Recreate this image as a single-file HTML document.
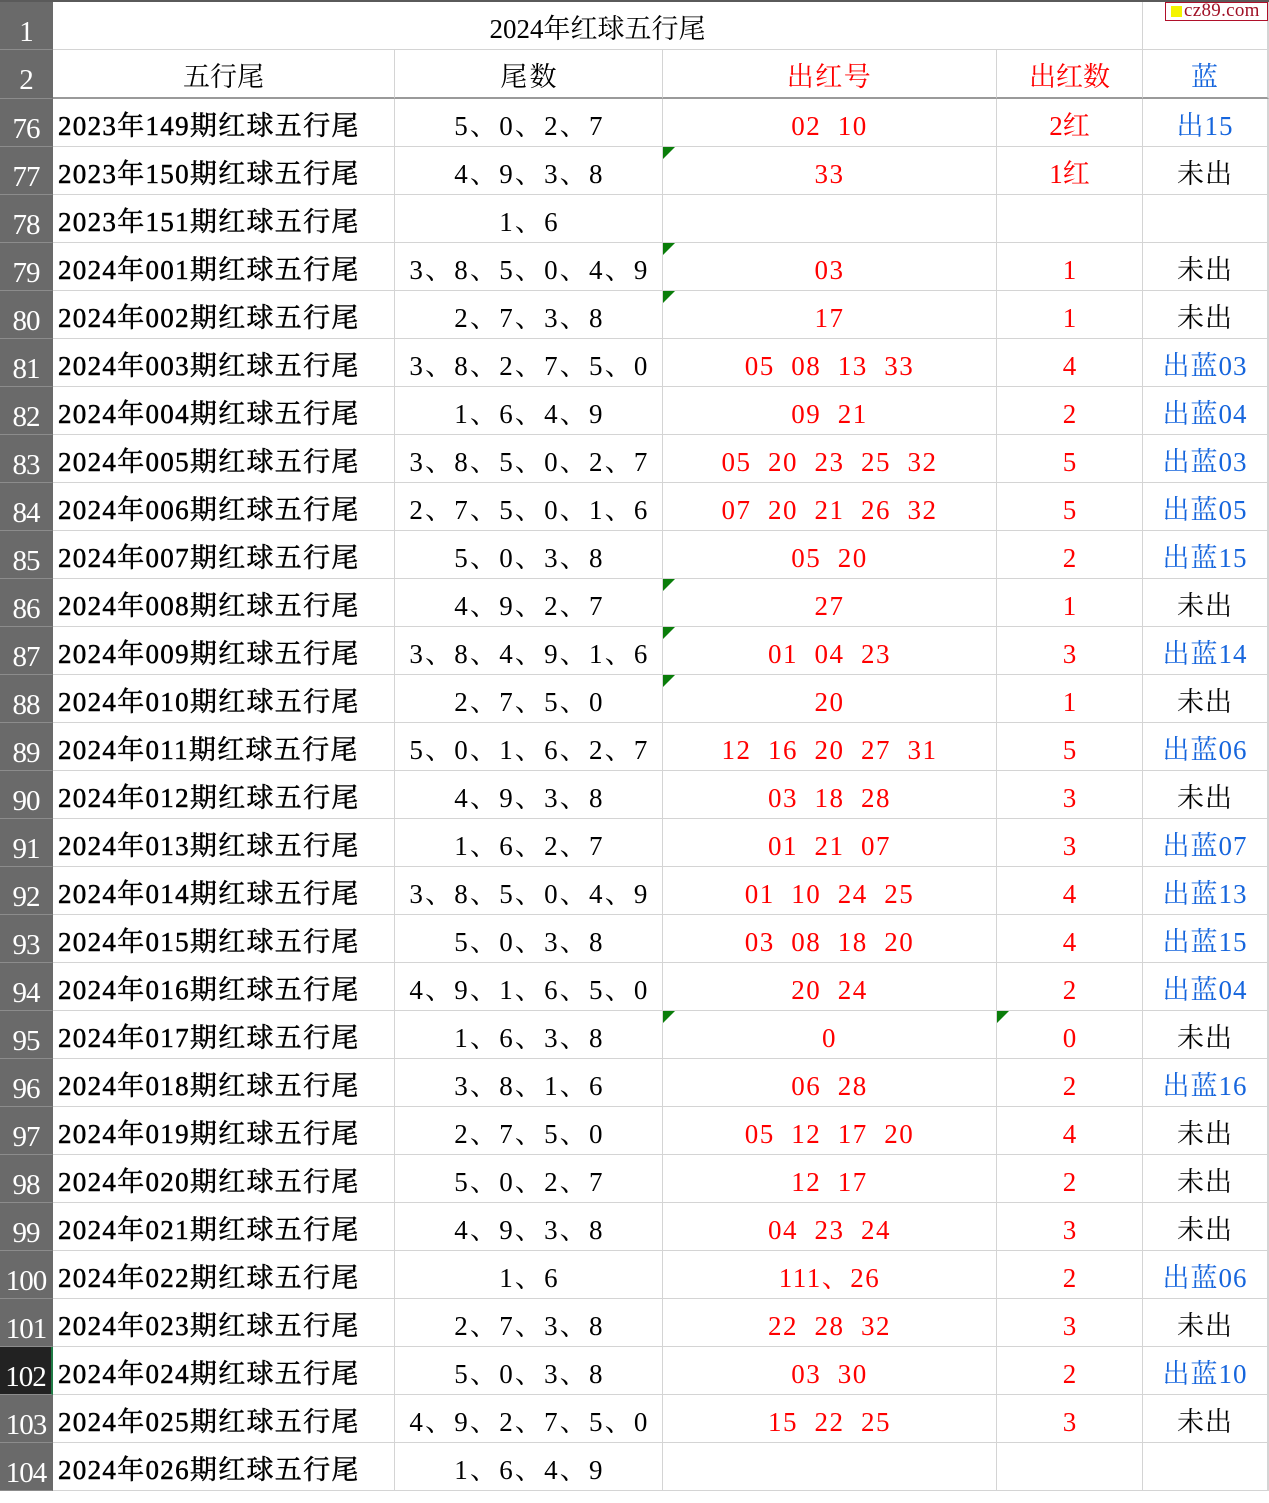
<!DOCTYPE html>
<html><head><meta charset="utf-8">
<style>
*{margin:0;padding:0;box-sizing:border-box}
body{width:1269px;height:1492px;overflow:hidden;background:#fff;position:relative;font-family:"Liberation Serif","Noto Serif CJK SC",serif;}
.top{position:absolute;left:0;top:0;width:1269px;height:2px;background:#5a5a5a}
.r{position:absolute;left:0;width:1269px;height:48px}
.r>div{position:absolute;top:0;height:48px;border-right:1px solid #d4d4d4;border-bottom:1px solid #d4d4d4;line-height:54px;white-space:pre;font-size:27px;text-align:center;color:#000}
.r>.h{left:0;width:53px;background:#6a6a6a;color:#fff;border-right:1px solid #6a6a6a;border-bottom:1px solid #8c8c8c;font-size:29px;line-height:60px;text-align:center;letter-spacing:-1px}
.r>.a{left:53px;width:342px;text-align:left;padding-left:5px;font-size:27px;letter-spacing:1.3px;-webkit-text-stroke:0.5px #000}
.r>.b{left:395px;width:268px;font-size:27px;letter-spacing:2.2px;padding-left:2px}
.r>.c{left:663px;width:334px;color:#f00;letter-spacing:1.5px}
.r>.d{left:997px;width:146px;color:#f00}
.r>.e{left:1143px;width:126px;border-right:2px solid #d4d4d4;letter-spacing:1px}
.bl{color:#1565dd!important}
.t::before{content:"";position:absolute;left:0;top:0;border-top:12px solid #0a7d0a;border-right:12px solid transparent}
.wm{position:absolute;left:1165px;top:2px;width:103px;height:19px;border:1px solid #b0102a;background:#fff;color:#a01025;font-size:19px;line-height:16px;padding-left:18px;letter-spacing:0.3px}
.wm::before{content:"";position:absolute;left:5px;top:3px;width:11px;height:11px;background:#f4f400}
</style></head><body>
<div class="top"></div>
<div class="r" style="top:2px"><div class="h">1</div><div style="left:53px;width:1090px;font-size:27px">2024年红球五行尾</div><div class="e"></div></div>
<div class="r" style="top:50px;height:49px"><div class="h" style="height:49px">2</div><div class="a" style="text-align:center;padding:0;letter-spacing:0;-webkit-text-stroke:0;border-bottom:2px solid #9a9a9a;height:49px">五行尾</div><div class="b" style="border-bottom:2px solid #9a9a9a;height:49px">尾数</div><div class="c" style="border-bottom:2px solid #9a9a9a;height:49px">出红号</div><div class="d" style="border-bottom:2px solid #9a9a9a;height:49px">出红数</div><div class="e bl" style="border-bottom:2px solid #9a9a9a;height:49px">蓝</div></div>

<div class="r" style="top:99px"><div class="h">76</div><div class="a">2023年149期红球五行尾</div><div class="b">5、0、2、7</div><div class="c">02  10</div><div class="d">2红</div><div class="e bl">出15</div></div>
<div class="r" style="top:147px"><div class="h">77</div><div class="a">2023年150期红球五行尾</div><div class="b">4、9、3、8</div><div class="c t">33</div><div class="d">1红</div><div class="e">未出</div></div>
<div class="r" style="top:195px"><div class="h">78</div><div class="a">2023年151期红球五行尾</div><div class="b">1、6</div><div class="c"></div><div class="d"></div><div class="e"></div></div>
<div class="r" style="top:243px"><div class="h">79</div><div class="a">2024年001期红球五行尾</div><div class="b">3、8、5、0、4、9</div><div class="c t">03</div><div class="d">1</div><div class="e">未出</div></div>
<div class="r" style="top:291px"><div class="h">80</div><div class="a">2024年002期红球五行尾</div><div class="b">2、7、3、8</div><div class="c t">17</div><div class="d">1</div><div class="e">未出</div></div>
<div class="r" style="top:339px"><div class="h">81</div><div class="a">2024年003期红球五行尾</div><div class="b">3、8、2、7、5、0</div><div class="c">05  08  13  33</div><div class="d">4</div><div class="e bl">出蓝03</div></div>
<div class="r" style="top:387px"><div class="h">82</div><div class="a">2024年004期红球五行尾</div><div class="b">1、6、4、9</div><div class="c">09  21</div><div class="d">2</div><div class="e bl">出蓝04</div></div>
<div class="r" style="top:435px"><div class="h">83</div><div class="a">2024年005期红球五行尾</div><div class="b">3、8、5、0、2、7</div><div class="c">05  20  23  25  32</div><div class="d">5</div><div class="e bl">出蓝03</div></div>
<div class="r" style="top:483px"><div class="h">84</div><div class="a">2024年006期红球五行尾</div><div class="b">2、7、5、0、1、6</div><div class="c">07  20  21  26  32</div><div class="d">5</div><div class="e bl">出蓝05</div></div>
<div class="r" style="top:531px"><div class="h">85</div><div class="a">2024年007期红球五行尾</div><div class="b">5、0、3、8</div><div class="c">05  20</div><div class="d">2</div><div class="e bl">出蓝15</div></div>
<div class="r" style="top:579px"><div class="h">86</div><div class="a">2024年008期红球五行尾</div><div class="b">4、9、2、7</div><div class="c t">27</div><div class="d">1</div><div class="e">未出</div></div>
<div class="r" style="top:627px"><div class="h">87</div><div class="a">2024年009期红球五行尾</div><div class="b">3、8、4、9、1、6</div><div class="c t">01  04  23</div><div class="d">3</div><div class="e bl">出蓝14</div></div>
<div class="r" style="top:675px"><div class="h">88</div><div class="a">2024年010期红球五行尾</div><div class="b">2、7、5、0</div><div class="c t">20</div><div class="d">1</div><div class="e">未出</div></div>
<div class="r" style="top:723px"><div class="h">89</div><div class="a">2024年011期红球五行尾</div><div class="b">5、0、1、6、2、7</div><div class="c">12  16  20  27  31</div><div class="d">5</div><div class="e bl">出蓝06</div></div>
<div class="r" style="top:771px"><div class="h">90</div><div class="a">2024年012期红球五行尾</div><div class="b">4、9、3、8</div><div class="c">03  18  28</div><div class="d">3</div><div class="e">未出</div></div>
<div class="r" style="top:819px"><div class="h">91</div><div class="a">2024年013期红球五行尾</div><div class="b">1、6、2、7</div><div class="c">01  21  07</div><div class="d">3</div><div class="e bl">出蓝07</div></div>
<div class="r" style="top:867px"><div class="h">92</div><div class="a">2024年014期红球五行尾</div><div class="b">3、8、5、0、4、9</div><div class="c">01  10  24  25</div><div class="d">4</div><div class="e bl">出蓝13</div></div>
<div class="r" style="top:915px"><div class="h">93</div><div class="a">2024年015期红球五行尾</div><div class="b">5、0、3、8</div><div class="c">03  08  18  20</div><div class="d">4</div><div class="e bl">出蓝15</div></div>
<div class="r" style="top:963px"><div class="h">94</div><div class="a">2024年016期红球五行尾</div><div class="b">4、9、1、6、5、0</div><div class="c">20  24</div><div class="d">2</div><div class="e bl">出蓝04</div></div>
<div class="r" style="top:1011px"><div class="h">95</div><div class="a">2024年017期红球五行尾</div><div class="b">1、6、3、8</div><div class="c t">0</div><div class="d t">0</div><div class="e">未出</div></div>
<div class="r" style="top:1059px"><div class="h">96</div><div class="a">2024年018期红球五行尾</div><div class="b">3、8、1、6</div><div class="c">06  28</div><div class="d">2</div><div class="e bl">出蓝16</div></div>
<div class="r" style="top:1107px"><div class="h">97</div><div class="a">2024年019期红球五行尾</div><div class="b">2、7、5、0</div><div class="c">05  12  17  20</div><div class="d">4</div><div class="e">未出</div></div>
<div class="r" style="top:1155px"><div class="h">98</div><div class="a">2024年020期红球五行尾</div><div class="b">5、0、2、7</div><div class="c">12  17</div><div class="d">2</div><div class="e">未出</div></div>
<div class="r" style="top:1203px"><div class="h">99</div><div class="a">2024年021期红球五行尾</div><div class="b">4、9、3、8</div><div class="c">04  23  24</div><div class="d">3</div><div class="e">未出</div></div>
<div class="r" style="top:1251px"><div class="h">100</div><div class="a">2024年022期红球五行尾</div><div class="b">1、6</div><div class="c">111、26</div><div class="d">2</div><div class="e bl">出蓝06</div></div>
<div class="r" style="top:1299px"><div class="h">101</div><div class="a">2024年023期红球五行尾</div><div class="b">2、7、3、8</div><div class="c">22  28  32</div><div class="d">3</div><div class="e">未出</div></div>
<div class="r" style="top:1347px"><div class="h" style="background:#222;border-right:2px solid #1f7a45">102</div><div class="a">2024年024期红球五行尾</div><div class="b">5、0、3、8</div><div class="c">03  30</div><div class="d">2</div><div class="e bl">出蓝10</div></div>
<div class="r" style="top:1395px"><div class="h">103</div><div class="a">2024年025期红球五行尾</div><div class="b">4、9、2、7、5、0</div><div class="c">15  22  25</div><div class="d">3</div><div class="e">未出</div></div>
<div class="r" style="top:1443px"><div class="h">104</div><div class="a">2024年026期红球五行尾</div><div class="b">1、6、4、9</div><div class="c"></div><div class="d"></div><div class="e"></div></div>

<div class="wm">cz89.com</div>
</body></html>
